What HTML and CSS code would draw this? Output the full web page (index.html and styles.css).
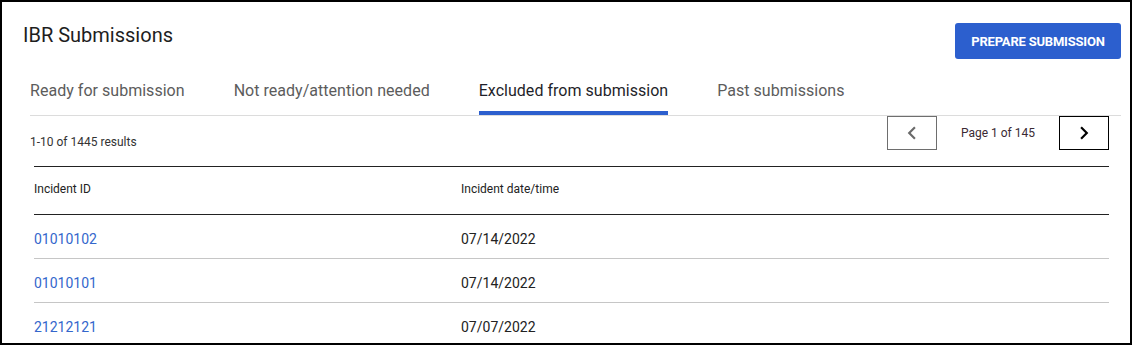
FILE: index.html
```html
<!DOCTYPE html>
<html lang="en">
<head>
  <meta charset="UTF-8">
  <meta name="viewport" content="width=device-width, initial-scale=1.0">
  <title>IBR Submissions</title>
  <link rel="stylesheet" href="styles.css">
</head>
<body>
  <div class="panel">
    <div class="panel-head">
      <h1>IBR Submissions</h1>
      <button class="btn-primary">PREPARE SUBMISSION</button>
    </div>

    <div class="tabs">
      <div class="tab">Ready for submission</div>
      <div class="tab">Not ready/attention needed</div>
      <div class="tab active">Excluded from submission</div>
      <div class="tab">Past submissions</div>
    </div>

    <div class="toolbar">
      <span class="results">1-10 of 1445 results</span>
      <div class="pager">
        <button class="pager-btn disabled">
          <svg width="26" height="26" viewBox="0 0 24 24"><path d="M15.41 7.41L14 6l-6 6 6 6 1.41-1.41L10.83 12z" fill="currentColor"/></svg>
        </button>
        <span class="page-info">Page 1 of 145</span>
        <button class="pager-btn">
          <svg width="26" height="26" viewBox="0 0 24 24"><path d="M8.59 16.59L10 18l6-6-6-6-1.41 1.41L13.170 12z" fill="currentColor"/></svg>
        </button>
      </div>
    </div>

    <table class="tabla">
      <thead>
        <tr>
          <th class="col-id">Incident ID</th>
          <th>Incident date/time</th>
        </tr>
      </thead>
      <tbody>
        <tr>
          <td><a href="#">01010102</a></td>
          <td>07/14/2022</td>
        </tr>
        <tr>
          <td><a href="#">01010101</a></td>
          <td>07/14/2022</td>
        </tr>
        <tr>
          <td><a href="#">21212121</a></td>
          <td>07/07/2022</td>
        </tr>
      </tbody>
    </table>
  </div>
</body>
</html>
```

FILE: styles.css
```css
body {
  margin: 0;
  font-family: Roboto, "Liberation Sans", sans-serif;
  background: #fff;
  color: #222;
}

.panel {
  box-sizing: border-box;
  height: 345px;
  border: 2px solid #000;
  padding: 21px 9px 0 21px;
  overflow: hidden;
}

.panel-head {
  display: flex;
  justify-content: space-between;
  align-items: flex-start;
}

h1 {
  margin: 0;
  font-size: 20px;
  line-height: 24px;
  font-weight: 400;
  color: #1e1e1e;
}

.btn-primary {
  width: 166px;
  height: 36px;
  background-color: #2c5fce;
  color: #fff;
  border: none;
  border-radius: 3px;
  font-family: inherit;
  font-size: 13px;
  font-weight: 700;
  letter-spacing: -0.2px;
  cursor: pointer;
}

/* Tabs */
.tabs {
  display: flex;
  margin: 22px 0 0 7px;
  border-bottom: 1px solid #dcdcdc;
}

.tab {
  font-size: 16px;
  line-height: 20px;
  padding-bottom: 10px;
  border-bottom: 4px solid transparent;
  margin-right: 49px;
  letter-spacing: 0.03px;
  color: #5c5c5c;
  cursor: pointer;
}

.tab.active {
  color: #1f1f2a;
  border-bottom-color: #2c5fce;
}

/* Barra de resultados */
.toolbar {
  display: flex;
  justify-content: space-between;
  align-items: flex-end;
  margin: 0 12px 0 7px;
}

.results {
  font-size: 12px;
  line-height: 14px;
  margin-bottom: 1px;
  color: #333;
}

.pager {
  display: flex;
  align-items: center;
  gap: 24px;
}

.pager-btn {
  box-sizing: border-box;
  width: 50px;
  height: 34px;
  padding: 0;
  border: 1px solid #000;
  background: #fff;
  color: #000;
  display: flex;
  align-items: center;
  justify-content: center;
}

.pager-btn.disabled {
  border-color: #6e6e6e;
  color: #6a6a6a;
}

.page-info {
  font-size: 12px;
  color: #3a2a33;
}

/* Tabla */
.tabla {
  width: 1075px;
  margin: 16px 0 0 11px;
  border-collapse: collapse;
}

.tabla th {
  text-align: left;
  font-size: 12px;
  line-height: 14px;
  font-weight: 400;
  color: #222;
  padding: 15px 0 18px 0;
  border-top: 1px solid #222;
  border-bottom: 1px solid #222;
}

.tabla .col-id {
  width: 427px;
}

.tabla td {
  font-size: 14px;
  line-height: 16px;
  padding: 16px 0 11px 0;
  border-bottom: 1px solid #c6c6c6;
  color: #222;
}

.tabla a {
  color: #3467cc;
  text-decoration: none;
}
```
